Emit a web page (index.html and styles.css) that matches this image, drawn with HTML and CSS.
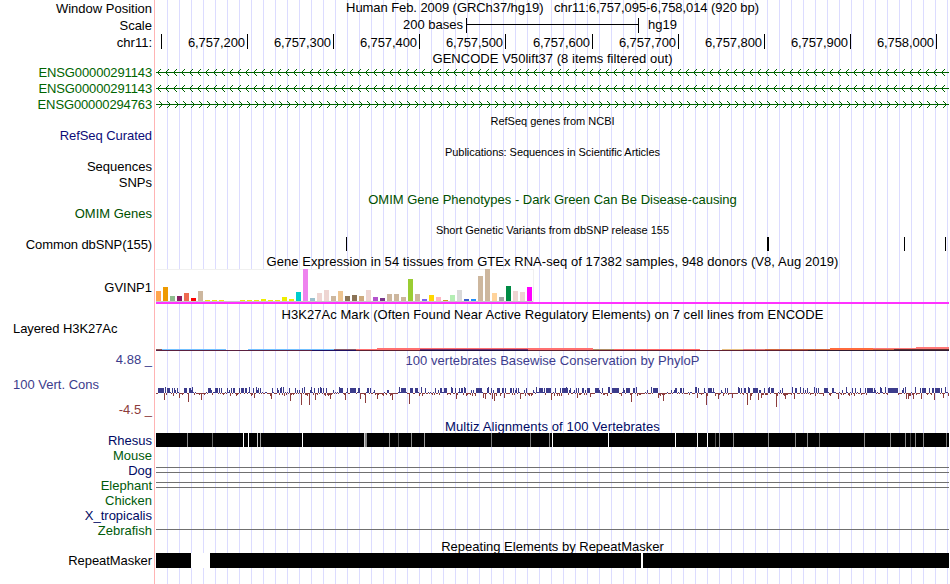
FILE: index.html
```html
<!doctype html>
<html lang="en">

<head>
  <meta charset="UTF-8" />
  <meta name="viewport" content="width=device-width, initial-scale=1.0" />
  <title>Genome Browser - chr11:6,757,095-6,758,014</title>
  <link rel="stylesheet" href="styles.css">
</head>

<body>
  <div class="browser">

    <!-- Ruler -->
    <div class="row ruler">
      <div class="label">Window Position</div>
      <div class="track title t-human">Human Feb. 2009 (GRCh37/hg19) &nbsp; chr11:6,757,095-6,758,014 (920 bp)</div>
    </div>
    <div class="row ruler">
      <div class="label">Scale</div>
      <div class="track scale">
        <span class="scale-text">200 bases</span>
        <span class="scale-bar"></span>
        <span>hg19</span>
      </div>
    </div>
    <div class="row ruler">
      <div class="label">chr11:</div>
      <div class="track ticks" id="ticks"></div>
    </div>

    <!-- Genes -->
    <div class="row heading short">
      <div class="track title t-gencode">GENCODE V50lift37 (8 items filtered out)</div>
    </div>
    <div class="row">
      <div class="label ensg">ENSG00000291143</div>
      <svg class="track arrows" data-dir="left" width="793" height="16"></svg>
    </div>
    <div class="row">
      <div class="label ensg">ENSG00000291143</div>
      <svg class="track arrows" data-dir="left" width="793" height="16"></svg>
    </div>
    <div class="row">
      <div class="label ensg">ENSG00000294763</div>
      <svg class="track arrows" data-dir="right" width="793" height="16"></svg>
    </div>
    <div class="row heading">
      <div class="track title small">RefSeq genes from NCBI</div>
    </div>
    <div class="row">
      <div class="label refseq">RefSeq Curated</div>
    </div>
    <div class="row heading">
      <div class="track title small t-pubs">Publications: Sequences in Scientific Articles</div>
    </div>
    <div class="row">
      <div class="label">Sequences</div>
    </div>
    <div class="row">
      <div class="label">SNPs</div>
    </div>
    <div class="row heading low">
      <div class="track title omim">OMIM Gene Phenotypes - Dark Green Can Be Disease-causing</div>
    </div>
    <div class="row">
      <div class="label omim">OMIM Genes</div>
    </div>

    <!-- Variation -->
    <div class="row heading">
      <div class="track title small">Short Genetic Variants from dbSNP release 155</div>
    </div>
    <div class="row">
      <div class="label dbsnp">Common dbSNP(155)</div>
      <svg class="track" width="793" height="16" shape-rendering="crispEdges">
        <rect x="190" width="1" height="14" />
        <rect x="611" width="2" height="14" />
        <rect x="748" width="1" height="14" />
        <rect x="789" width="1" height="14" />
      </svg>
    </div>

    <!-- Expression -->
    <div class="row heading low">
      <div class="track title t-gtex">Gene Expression in 54 tissues from GTEx RNA-seq of 17382 samples, 948 donors (V8, Aug 2019)</div>
    </div>
    <div class="row expression">
      <div class="label">GVINP1</div>
      <div class="track">
        <div class="tissues" id="tissues"></div>
        <div class="gene-model"></div>
      </div>
    </div>

    <!-- Regulation -->
    <div class="row heading short">
      <div class="track title t-h3k">H3K27Ac Mark (Often Found Near Active Regulatory Elements) on 7 cell lines from ENCODE</div>
    </div>
    <div class="row h3k">
      <div class="label left">Layered H3K27Ac</div>
      <svg class="track" id="h3k27ac" width="793" height="32" shape-rendering="crispEdges"></svg>
    </div>

    <!-- Conservation -->
    <div class="row cons">
      <div class="label cons-labels">
        <span class="max">4.88 _</span>
        <span class="name">100 Vert. Cons</span>
        <span class="min">-4.5 _</span>
      </div>
      <div class="track">
        <div class="title phylop">100 vertebrates Basewise Conservation by PhyloP</div>
        <svg id="phylop" width="793" height="50" shape-rendering="crispEdges"></svg>
      </div>
    </div>
    <div class="row heading short">
      <div class="track title multiz">Multiz Alignments of 100 Vertebrates</div>
    </div>
    <div class="row species">
      <div class="label navy">Rhesus</div>
      <svg class="track" id="rhesus" width="793" height="14" shape-rendering="crispEdges"></svg>
    </div>
    <div class="row species">
      <div class="label green">Mouse</div>
    </div>
    <div class="row species">
      <div class="label navy">Dog</div>
      <div class="track double"></div>
    </div>
    <div class="row species">
      <div class="label green">Elephant</div>
      <div class="track double"></div>
    </div>
    <div class="row species">
      <div class="label green">Chicken</div>
    </div>
    <div class="row species">
      <div class="label navy">X_tropicalis</div>
    </div>
    <div class="row species">
      <div class="label green">Zebrafish</div>
      <div class="track single"></div>
    </div>

    <!-- Repeats -->
    <div class="row heading low">
      <div class="track title">Repeating Elements by RepeatMasker</div>
    </div>
    <div class="row">
      <div class="label repeat">RepeatMasker</div>
      <svg class="track" width="793" height="15" shape-rendering="crispEdges">
        <rect width="793" height="15" />
        <rect class="gap" x="35" width="19" height="15" />
        <rect class="gap" x="485" width="2" height="15" />
      </svg>
    </div>
  </div>

  <script src="tracks.js"></script>
</body>

</html>
```

FILE: styles.css
```css
* {
  margin: 0;
  padding: 0;
  box-sizing: border-box;
}

body {
  background: #fff;
  color: #000;
  font: 13px/16px "Liberation Sans", Arial, sans-serif;
  overflow: hidden;
}

.browser {
  width: 949px;
  height: 584px;
  /* left margin line, then a guide every 12px */
  background:
    linear-gradient(#ffb4b4, #ffb4b4) 154px 0 / 1px 100% no-repeat,
    repeating-linear-gradient(to right, #dcdcff 0 1px, transparent 1px 12px) 167px 0 / 782px 100% no-repeat;
}

.row {
  display: grid;
  grid-template-columns: 152px 793px;
  column-gap: 4px;
  height: 16px;
  white-space: nowrap;
}

.label {
  grid-column: 1;
  text-align: right;
}

.track {
  grid-column: 2;
  display: block;
}

.title {
  text-align: center;
}

.small {
  font-size: 11px;
}

.heading {
  height: 15px;
}

.heading.short {
  height: 14px;
}

.heading.low {
  padding-top: 1px;
}

/* Title tracking */
.t-human {
  letter-spacing: -0.07px;
}

.t-gencode {
  letter-spacing: 0.04px;
}

.t-pubs {
  letter-spacing: -0.06px;
}

.t-gtex,
.t-h3k {
  letter-spacing: 0.05px;
}

/* Ruler */
.ruler {
  height: 17px;
}

.ruler .label {
  padding-top: 1px;
}

.scale {
  display: flex;
  padding-left: 247px;
}

.scale-text {
  width: 60px;
  margin-right: 3px;
}

.scale-bar {
  width: 173px;
  height: 15px;
  margin: 1px 9px 0 0;
  border: solid #000;
  border-width: 0 1px;
  background: linear-gradient(#000, #000) 0 6px / 100% 1px no-repeat;
}

.ticks {
  display: flex;
}

.tick {
  height: 15px;
  padding-right: 2px;
  border-right: 1px solid #000;
  text-align: right;
  letter-spacing: -0.08px;
  line-height: 17px;
}

/* Label colors */
.ensg {
  color: #006400;
  letter-spacing: -0.13px;
}

.refseq {
  color: #0c0c78;
  letter-spacing: -0.07px;
}

.dbsnp {
  letter-spacing: -0.1px;
}

.repeat {
  letter-spacing: -0.07px;
}

.omim {
  color: #005000;
}

.navy,
.multiz {
  color: #000a64;
}

.multiz {
  letter-spacing: 0.11px;
}

.green {
  color: #005a0a;
}

.arrows {
  stroke: #006400;
  fill: none;
}

/* GTEx */
.expression {
  height: 39px;
  padding-top: 1px;
}

.expression .label {
  padding-top: 11px;
}

.tissues {
  display: flex;
  align-items: flex-end;
  gap: 2px;
  width: 378px;
  height: 33px;
  background: #fff;
  border: 1px solid #f0f0f0;
  border-width: 1px 1px 0 0;
  box-shadow: inset 0 -1px #c8c8c8;
  padding-bottom: 1px;
}

.tissue {
  width: 5px;
}

.gene-model {
  height: 2px;
  background: #ff33ff;
}

/* H3K27Ac */
.h3k {
  height: 32px;
}

.label.left {
  text-align: left;
  padding-left: 13px;
  letter-spacing: -0.08px;
}

/* Conservation */
.cons {
  height: 66px;
}

.cons-labels {
  display: flex;
  flex-direction: column;
  margin-top: -1px;
}

.cons-labels .max,
.phylop {
  color: #3c3c8c;
}

.phylop {
  letter-spacing: 0.04px;
}

.cons-labels .name {
  margin: 9px 0;
  padding-left: 13px;
  text-align: left;
  color: #3c3c8c;
}

.cons-labels .min {
  color: #8c3c3c;
}

.species {
  height: 15px;
}

.double {
  height: 6px;
  margin-top: 4px;
  border: solid #707070;
  border-width: 1px 0;
}

.single {
  height: 1px;
  margin-top: 6px;
  background: #707070;
}

.gap {
  fill: #fff;
}
```

FILE: tracks.js
```js
const svgNS = "http://www.w3.org/2000/svg";

function rect(svg, x, y, w, h, fill) {
  const r = document.createElementNS(svgNS, "rect");
  r.setAttribute("x", x);
  r.setAttribute("y", y);
  r.setAttribute("width", w);
  r.setAttribute("height", h);
  r.setAttribute("fill", fill);
  svg.appendChild(r);
}

// Ruler ticks: [cell width, text]
const ticks = [
  [6, ""], [86, "6,757,200"], [86, "6,757,300"], [86, "6,757,400"], [86, "6,757,500"],
  [87, "6,757,600"], [86, "6,757,700"], [86, "6,757,800"], [86, "6,757,900"], [86, "6,758,000"]
];
for (const [width, text] of ticks) {
  const tick = document.createElement("div");
  tick.className = "tick";
  tick.style.width = `${width}px`;
  tick.textContent = text;
  document.getElementById("ticks").appendChild(tick);
}

// Intron lines with strand arrows
document.querySelectorAll(".arrows").forEach(svg => {
  let d = "M0 7.5H793";
  for (let x = 1.5; x < 792; x += 8) {
    d += svg.dataset.dir === "left"
      ? `M${x + 3.5} 4L${x} 7.5L${x + 3.5} 11`
      : `M${x + 1.5} 4L${x + 5} 7.5L${x + 1.5} 11`;
  }
  const path = document.createElementNS(svgNS, "path");
  path.setAttribute("d", d);
  svg.appendChild(path);
});

// GTEx tissues: [height, color]
const tissues = [
  [10, "#ffa54f"], [14, "#ee9a00"], [5, "#8fbc8f"], [5, "#8b1c62"], [8, "#ee6a50"], [3, "#ff0000"],
  [10, "#cdb79e"], [1, "#eeee00"], [1, "#eeee00"], [1, "#eeee00"], [0, "#eeee00"], [0, "#eeee00"],
  [1, "#eeee00"], [1, "#eeee00"], [1, "#eeee00"], [2, "#eeee00"], [1, "#eeee00"], [1, "#eeee00"],
  [4, "#eeee00"], [2, "#eeee00"], [9, "#00cdcd"], [32, "#ee82ee"], [3, "#9ac0cd"], [8, "#eed5d2"],
  [11, "#eed5d2"], [5, "#cdb79e"], [10, "#eec591"], [5, "#8b7355"], [6, "#8b7355"], [5, "#cdaa7d"],
  [11, "#eed5d2"], [4, "#b452cd"], [3, "#7a378b"], [7, "#cdb79e"], [7, "#cdb79e"], [4, "#cdb79e"],
  [22, "#9acd32"], [7, "#cdb79e"], [2, "#7a67ee"], [6, "#ffd700"], [4, "#ffb6c1"], [1, "#cd9b1d"],
  [6, "#b4eeb4"], [11, "#d9d9d9"], [2, "#3a5fcd"], [2, "#1e90ff"], [25, "#cdb79e"], [32, "#cdb79e"],
  [8, "#ffd39b"], [4, "#a6a6a6"], [15, "#008b45"], [10, "#eed5d2"], [9, "#eed5d2"], [14, "#ff00ff"]
];
for (const [height, color] of tissues) {
  const bar = document.createElement("div");
  bar.className = "tissue";
  bar.style.height = `${height}px`;
  bar.style.background = color;
  document.getElementById("tissues").appendChild(bar);
}

// H3K27Ac layers: [x, y, width, height, color]
const layers = [
  [0, 29, 156, 1, "#5a2040"], [156, 29, 44, 1, "#201060"], [200, 29, 593, 1, "#602030"],
  [0, 28, 6, 1, "#8b5a5a"], [6, 28, 64, 1, "#70bfff"], [92, 28, 86, 1, "#70bfff"],
  [178, 28, 22, 1, "#8b5a6b"], [200, 28, 21, 1, "#ff7070"], [221, 27, 43, 2, "#ff7070"],
  [264, 27, 108, 1, "#ff7070"], [264, 28, 108, 1, "#7a2a6a"], [264, 29, 108, 1, "#201040"],
  [372, 27, 65, 2, "#ff7070"], [437, 28, 21, 1, "#b08c64"], [458, 28, 86, 1, "#ff6464"],
  [566, 28, 21, 1, "#e6be82"], [587, 28, 22, 1, "#e67878"], [609, 28, 65, 1, "#d2643c"],
  [674, 27, 43, 2, "#ff6a3c"], [717, 27, 76, 1, "#ff7878"], [717, 28, 21, 1, "#d2643c"],
  [738, 28, 55, 1, "#603030"], [760, 26, 33, 2, "#ff7878"], [652, 29, 141, 1, "#301c30"]
];
layers.forEach(l => rect(document.getElementById("h3k27ac"), ...l));

// PhyloP: strongly conserved runs [x, width] and fast evolving bases [x, depth]
const conserved = [
  [2, 6], [12, 2], [52, 3], [85, 3], [115, 2], [184, 3], [197, 3], [245, 3], [254, 3], [259, 3],
  [320, 6], [383, 4], [407, 3], [456, 7], [470, 4], [497, 4], [552, 4], [597, 2], [615, 3],
  [669, 3], [711, 5], [733, 9], [781, 3]
];
const dips = [
  [8, 7], [23, 5], [32, 9], [45, 7], [98, 5], [115, 6], [134, 8], [145, 12], [153, 12], [159, 7],
  [174, 6], [189, 7], [204, 6], [209, 10], [221, 6], [236, 7], [253, 11], [300, 6], [327, 5],
  [329, 6], [336, 6], [338, 8], [348, 5], [364, 6], [395, 7], [421, 5], [434, 4], [475, 9],
  [502, 5], [507, 8], [541, 5], [550, 12], [562, 6], [576, 5], [591, 12], [594, 7], [602, 7],
  [605, 5], [620, 14], [629, 6], [638, 6], [682, 6], [750, 6], [752, 6], [757, 6], [765, 6],
  [778, 7], [787, 5]
];

// The bases in between are placeholder values from a seeded generator,
// not real PhyloP scores
const scores = [];
let seed = 11;
function next() {
  seed = (seed * 1103515245 + 12345) % 2147483648;
  return seed / 2147483648;
}
for (let i = 0; i < 793; i++) {
  const ups = [5, 5, 1, 5, 5, 3, 1, 6];
  const downs = [1, 1, 1, 1, 2, 1, 3, 2];
  const up = next() < 0.45;
  const k = Math.floor(next() * 8);
  scores.push(up ? ups[k] : -downs[k]);
}
conserved.forEach(([x, w]) => scores.fill(5, x, x + w));
dips.forEach(([x, depth]) => { scores[x] = -depth; });

const phylop = document.getElementById("phylop");
scores.forEach((s, i) => {
  if (s > 0) {
    rect(phylop, i, 24 - s, 1, s, "#3c3c8c");
  } else {
    rect(phylop, i, 24, 1, -s, "#8c3c3c");
  }
});

// Rhesus alignment with the mismatching columns
const rhesus = document.getElementById("rhesus");
const columns = [
  [31, "#888"], [56, "#666"], [87, "#fff"], [92, "#fff"], [101, "#ccc"], [104, "#999"], [146, "#fff"],
  [208, "#ccc"], [209, "#888"], [210, "#888"], [233, "#888"], [242, "#555"], [255, "#888"],
  [268, "#999"], [335, "#777"], [374, "#777"], [393, "#888"], [396, "#fff"], [452, "#fff"],
  [519, "#fff"], [541, "#eee"], [551, "#fff"], [559, "#555"], [563, "#888"], [577, "#888"],
  [612, "#888"], [639, "#888"], [651, "#888"], [663, "#666"], [708, "#888"], [734, "#888"],
  [749, "#888"], [754, "#444"], [759, "#888"], [767, "#888"], [790, "#777"]
];
rect(rhesus, 0, 0, 793, 14, "#000");
columns.forEach(([x, color]) => rect(rhesus, x, 0, 1, 14, color));
```
